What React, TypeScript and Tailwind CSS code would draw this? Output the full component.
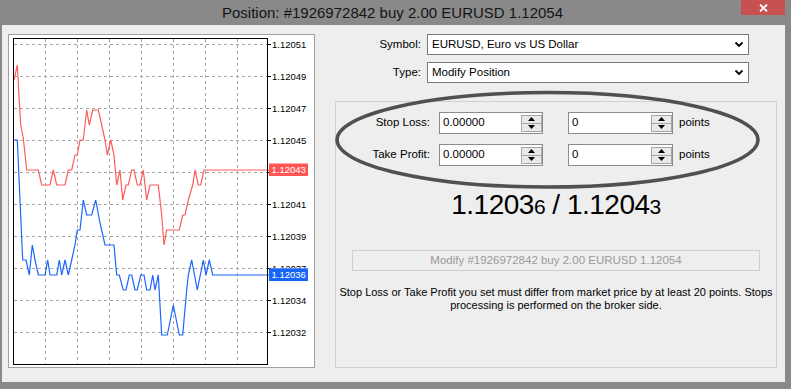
import React from "react";

const red: [number, number][] = [
  [14, 80], [17.3, 65], [20.7, 125], [23.3, 138], [26.7, 170], [38.3, 170], [41.7, 185], [50, 185], [53.3, 170], [56.7, 185], [65, 185], [68.3, 170], [71.7, 170], [75, 155], [77.3, 155], [80, 140], [83.3, 140], [86.7, 110], [89.3, 125], [92.7, 110], [98.3, 110], [101.7, 125], [105, 140], [107.3, 155], [110.7, 140], [114, 155], [116.7, 185], [120, 170], [122.7, 200], [126, 185], [128.3, 185], [131.7, 170], [134, 170], [137.3, 185], [140, 185], [143.3, 170], [146.7, 200], [150, 185], [158.3, 185], [161.7, 215], [164, 245], [166.7, 230], [179.3, 230], [182.7, 215], [185, 215], [188.3, 200], [192.7, 185], [195, 170], [198.3, 185], [200.7, 185], [204, 170], [270, 170],
];

const blue: [number, number][] = [
  [14, 140], [17.3, 140], [22.7, 260], [26, 260], [29.3, 275], [32.3, 245], [35, 260], [38.3, 275], [45, 275], [47.7, 260], [50, 275], [56.7, 275], [59.3, 260], [61.7, 275], [65, 260], [68.3, 275], [71.7, 260], [75, 245], [77.3, 230], [80, 230], [83.3, 200], [86.7, 215], [91.7, 215], [95.7, 200], [100, 223], [105, 245], [114, 245], [116.7, 275], [119.3, 275], [123.3, 290], [126, 290], [129.3, 275], [131.7, 275], [135, 290], [137.3, 290], [140.7, 275], [144, 275], [146.7, 290], [150, 290], [152.7, 275], [155, 290], [158.3, 275], [161.7, 335], [167.3, 335], [173.3, 305], [179.3, 335], [182.7, 335], [186.7, 290], [188.3, 275], [191.7, 260], [197.3, 290], [203.3, 260], [206, 275], [209.3, 260], [212.7, 275], [270, 275],
];

const labels = ["1.12051", "1.12049", "1.12047", "1.12045", "1.12043", "1.12041", "1.12039", "1.12037", "1.12034", "1.12032"];
const vx = [45, 77, 109, 141, 173, 205, 237];
const FF = "'Liberation Sans', Arial, sans-serif";

function Chart() {
  return (
    <svg width={305} height={332} viewBox="9 35 305 332" className="block">
      <defs>
        <clipPath id="above-blue">
          <rect x={260} y={255} width={60} height={13.3} />
        </clipPath>
      </defs>
      <rect x={9} y={35} width={305} height={332} fill="#ffffff" />
      {vx.map((x) => (
        <line key={x} x1={x + 0.5} y1={39} x2={x + 0.5} y2={364} stroke="#a8a8a8" strokeWidth={1} strokeDasharray="3 3" />
      ))}
      {labels.map((_, i) => (
        <line key={i} x1={14} y1={44.5 + i * 32} x2={267} y2={44.5 + i * 32} stroke="#a8a8a8" strokeWidth={1} strokeDasharray="3 3" />
      ))}
      <polyline points={red.map((p) => p.join(",")).join(" ")} fill="none" stroke="#ff5a5a" strokeWidth={1.2} />
      <polyline points={blue.map((p) => p.join(",")).join(" ")} fill="none" stroke="#1a66ff" strokeWidth={1.2} />
      <rect x={13.5} y={38.5} width={254} height={326} fill="none" stroke="#000" strokeWidth={1} />
      {labels.map((l, i) => (
        <g key={l}>
          <line x1={267} y1={44.5 + i * 32} x2={271} y2={44.5 + i * 32} stroke="#000" strokeWidth={1} />
          {l === "1.12043" ? null : l === "1.12037" ? (
            <g clipPath="url(#above-blue)">
              <text x={272} y={44.5 + i * 32 + 3.5} fontSize={9.5} fill="#000" fontFamily={FF}>
                {l}
              </text>
            </g>
          ) : (
            <text x={272} y={44.5 + i * 32 + 3.5} fontSize={9.5} fill="#000" fontFamily={FF}>
              {l}
            </text>
          )}
        </g>
      ))}
      <rect x={269} y={163.5} width={39} height={12.5} fill="#ff5555" />
      <text x={271.5} y={173} fontSize={9.5} fill="#fff" fontFamily={FF}>1.12043</text>
      <rect x={269} y={268.3} width={39} height={12.7} fill="#1766f5" />
      <text x={271.5} y={278} fontSize={9.5} fill="#fff" fontFamily={FF}>1.12036</text>
    </svg>
  );
}

function Chevron() {
  return (
    <svg width={10} height={7} viewBox="0 0 10 7" className="block">
      <polyline points="1.5,1.5 5,5 8.5,1.5" fill="none" stroke="#000" strokeWidth={1.8} />
    </svg>
  );
}

function Select({ value }: { value: string }) {
  return (
    <div className="ml-[6px] w-[322px] h-[21px] bg-white border border-[#7a7a7a] flex items-center pl-[4px] pr-[4px]">
      <span className="flex-1 text-[11.5px] text-black">{value}</span>
      <Chevron />
    </div>
  );
}

function Spinner() {
  return (
    <div className="w-[21px] h-[17px] border border-[#a6a6a6] bg-[#e9e9e9] flex flex-col">
      <div className="flex-1 flex items-center justify-center border-b border-[#a6a6a6]">
        <svg width={7} height={4} viewBox="0 0 7 4"><polygon points="0,4 7,4 3.5,0" fill="#000" /></svg>
      </div>
      <div className="flex-1 flex items-center justify-center">
        <svg width={7} height={4} viewBox="0 0 7 4"><polygon points="0,0 7,0 3.5,4" fill="#000" /></svg>
      </div>
    </div>
  );
}

function Spin({ value, wide }: { value: string; wide?: boolean }) {
  return (
    <div className={`${wide ? "w-[105px]" : "w-[104px]"} h-[22px] bg-white border border-[#8c8c8c] flex items-center pl-[3px]`}>
      <span className="flex-1 text-[11.5px] text-black">{value}</span>
      <Spinner />
    </div>
  );
}

function LevelRow({ label }: { label: string }) {
  return (
    <div className="flex items-center h-[22px]">
      <div className="w-[94px] text-right text-[11.5px] text-black">{label}</div>
      <div className="ml-[9px]">
        <Spin value="0.00000" />
      </div>
      <div className="ml-[25px]">
        <Spin value="0" wide />
      </div>
      <span className="ml-[6px] text-[11.5px] text-black">points</span>
    </div>
  );
}

export default function App() {
  return (
    <div className="relative w-[791px] h-[389px] bg-[#898989] font-['Liberation_Sans',Arial,sans-serif] overflow-hidden">
      <div className="relative h-[25px] flex items-center justify-center pr-[6px]">
        <span className="text-[15px] text-[#151515] leading-none">Position: #1926972842 buy 2.00 EURUSD 1.12054</span>
        <div className="absolute right-[6px] top-0 w-[44px] h-[15px] bg-[#c75050] flex items-center justify-center">
          <svg width={9} height={8} viewBox="0 0 9 8">
            <path d="M1 0.5 L8 7.5 M8 0.5 L1 7.5" stroke="#fff" strokeWidth={1.8} />
          </svg>
        </div>
      </div>
      <div className="ml-[2px] w-[783px] h-[357px] bg-[#eeeeee] flex pt-[9px]">
        <div className="ml-[6px] w-[307px] h-[334px] border border-[#a0a0a0] bg-white">
          <Chart />
        </div>
        <div className="ml-[20px] w-[442px] flex flex-col">
          <div className="flex items-center h-[21px]">
            <div className="w-[86px] text-right text-[11.5px] text-black">Symbol:</div>
            <Select value="EURUSD, Euro vs US Dollar" />
          </div>
          <div className="flex items-center h-[21px] mt-[7px]">
            <div className="w-[86px] text-right text-[11.5px] text-black">Type:</div>
            <Select value="Modify Position" />
          </div>
          <div className="mt-[18px] h-[267px] border border-[#d0d0d0] flex flex-col">
            <div className="mt-[10px] flex flex-col gap-[10px]">
              <LevelRow label="Stop Loss:" />
              <LevelRow label="Take Profit:" />
            </div>
            <div className="mt-[23px] text-center text-[28px] leading-[32px] tracking-[-0.5px] text-black">
              1.1203<span className="text-[21px]">6</span> / 1.1204<span className="text-[21px]">3</span>
            </div>
            <div className="mt-[27px] mx-[16px] h-[21px] border border-[#cfcfcf] bg-[#eeeeee] flex items-center justify-center text-[11.5px] text-[#9a9a9a]">
              Modify #1926972842 buy 2.00 EURUSD 1.12054
            </div>
            <div className="mt-[15px] text-center text-[11px] leading-[13px] text-black">
              Stop Loss or Take Profit you set must differ from market price by at least 20 points. Stops processing is performed on the broker side.
            </div>
          </div>
        </div>
      </div>
      <svg className="absolute left-0 top-0 pointer-events-none" width={791} height={389}>
        <ellipse cx={547.5} cy={139.8} rx={210.5} ry={47.2} fill="none" stroke="#505050" strokeWidth={3.5} />
      </svg>
    </div>
  );
}
